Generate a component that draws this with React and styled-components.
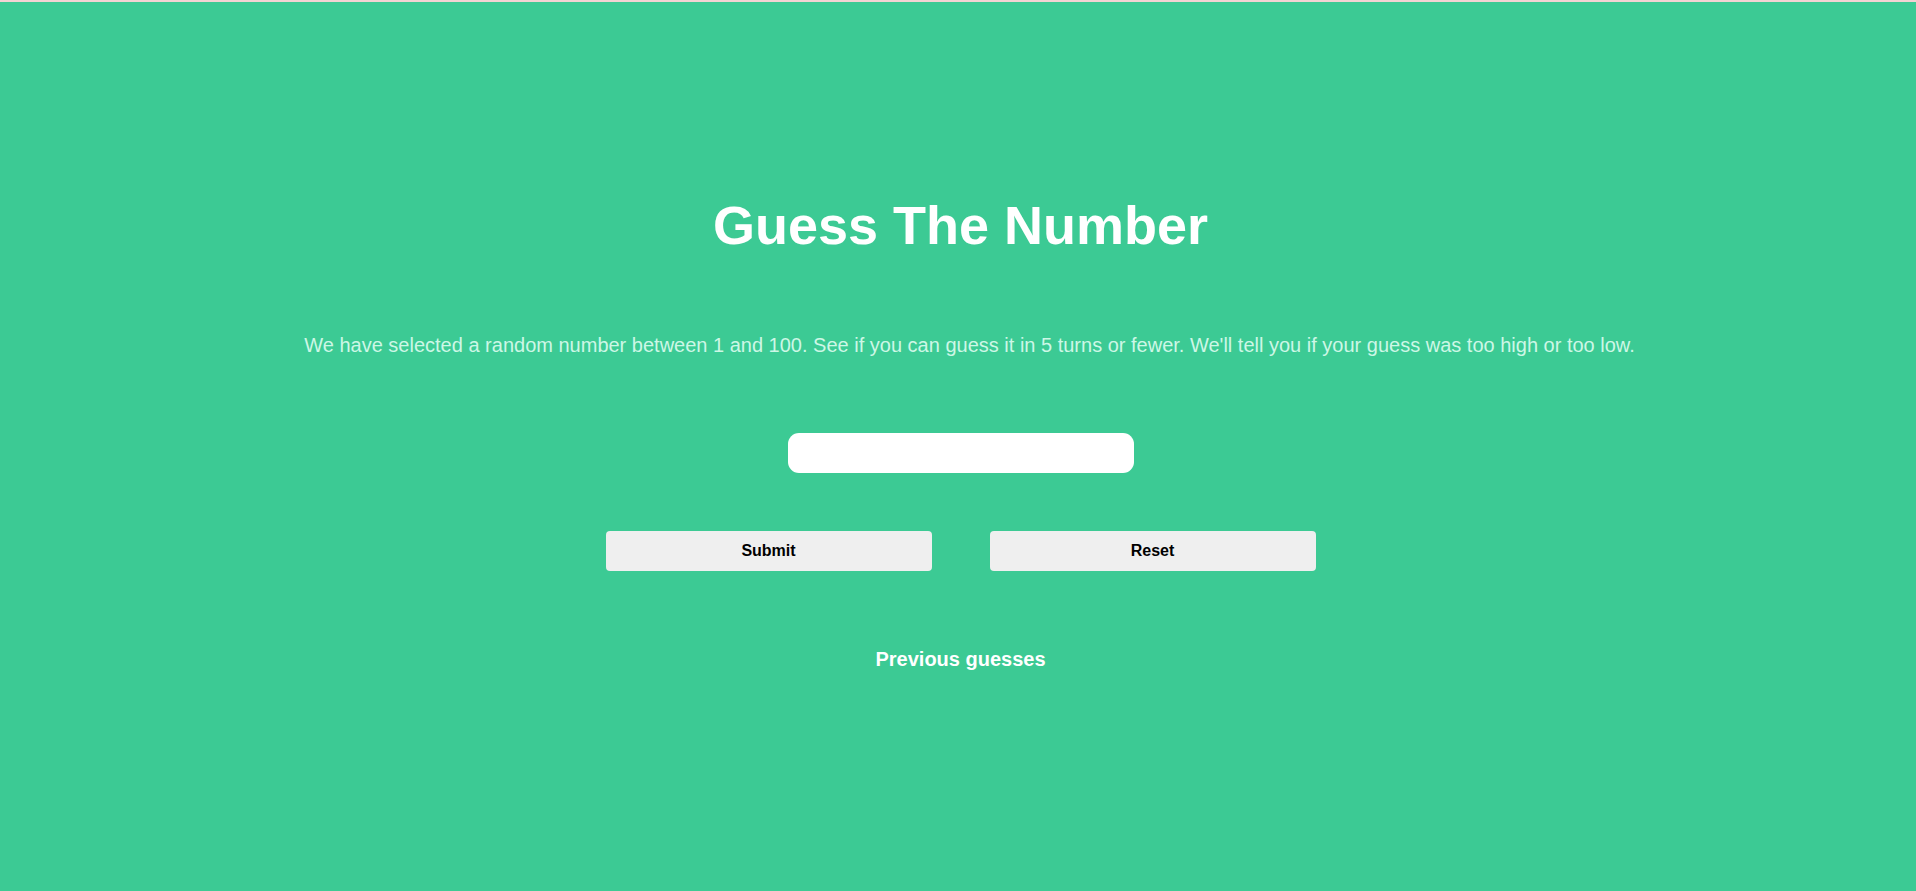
import React, { useState } from "react";
import styled, { createGlobalStyle } from "styled-components";

const GlobalStyle = createGlobalStyle`
  html, body {
    margin: 0;
    padding: 0;
    background: #f3d3d3;
  }
  body {
    font-family: "Liberation Sans", Arial, sans-serif;
  }
`;

const Page = styled.div`
  margin-top: 2px;
  min-height: 889px;
  background-color: #3cca94;
  display: flex;
  flex-direction: column;
  align-items: center;
  padding: 190px 0 0 5px;
  box-sizing: border-box;
`;

const Title = styled.h1`
  margin: 0;
  font-size: 54px;
  font-weight: bold;
  color: #ffffff;
  line-height: 66px;
`;

const Intro = styled.p`
  margin: 76px 0 0 18px;
  font-size: 20px;
  color: #cdf7e6;
  line-height: 22px;
`;

const GuessInput = styled.input`
  margin-top: 77px;
  width: 346px;
  height: 40px;
  box-sizing: border-box;
  border: none;
  border-radius: 11px;
  background: #ffffff;
  padding: 0 12px;
  font-size: 18px;
  outline: none;
`;

const Buttons = styled.div`
  margin-top: 58px;
  display: flex;
  gap: 58px;
`;

const Button = styled.button`
  width: 326px;
  height: 40px;
  border: none;
  border-radius: 4px;
  background-color: #efefef;
  color: #000000;
  font-family: "Liberation Sans", Arial, sans-serif;
  font-size: 16px;
  font-weight: bold;
  cursor: pointer;
`;

const History = styled.h3`
  margin: 77px 0 0;
  font-size: 20px;
  font-weight: bold;
  color: #ffffff;
`;

const App = () => {
  const [guess, setGuess] = useState("");

  return (
    <>
      <GlobalStyle />
      <Page>
        <Title>Guess The Number</Title>
        <Intro>
          We have selected a random number between 1 and 100. See if you can guess it in 5 turns or fewer.
          We'll tell you if your guess was too high or too low.
        </Intro>
        <GuessInput value={guess} onChange={(e) => setGuess(e.target.value)} />
        <Buttons>
          <Button>Submit</Button>
          <Button onClick={() => setGuess("")}>Reset</Button>
        </Buttons>
        <History>Previous guesses</History>
      </Page>
    </>
  );
};

export default App;
